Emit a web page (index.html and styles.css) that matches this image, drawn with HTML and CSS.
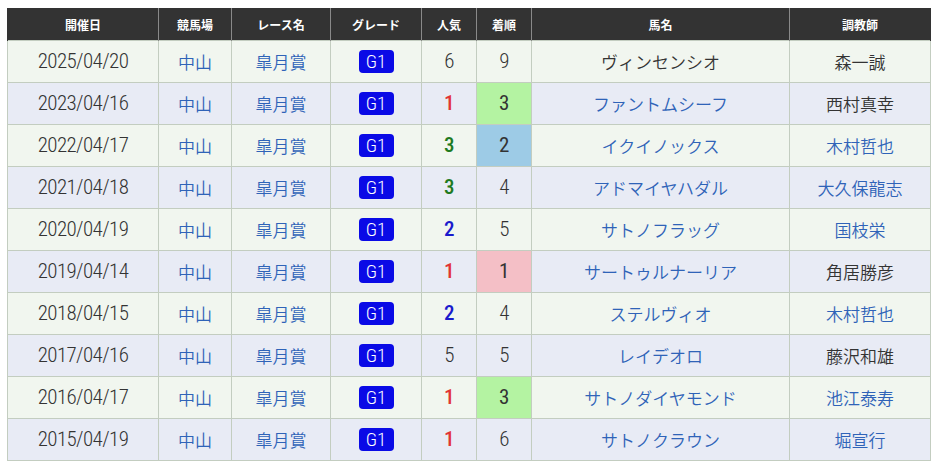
FILE: index.html
```html
<!DOCTYPE html>
<html lang="ja">
<head>
<meta charset="utf-8">
<link rel="stylesheet" href="styles.css">
</head>
<body>
<table class="results">
  <colgroup>
    <col class="c-date"><col class="c-place"><col class="c-race"><col class="c-grade"><col class="c-pop"><col class="c-rank"><col class="c-horse"><col class="c-trainer">
  </colgroup>
  <thead>
    <tr><th>開催日</th><th>競馬場</th><th>レース名</th><th>グレード</th><th>人気</th><th>着順</th><th>馬名</th><th>調教師</th></tr>
  </thead>
  <tbody>
    <tr class="odd"><td class="num">2025/04/20</td><td class="link">中山</td><td class="link">皐月賞</td><td><span class="g1">G1</span></td><td class="num">6</td><td class="num">9</td><td>ヴィンセンシオ</td><td>森一誠</td></tr>
    <tr class="even"><td class="num">2023/04/16</td><td class="link">中山</td><td class="link">皐月賞</td><td><span class="g1">G1</span></td><td class="num p1">1</td><td class="num r3">3</td><td class="link">ファントムシーフ</td><td>西村真幸</td></tr>
    <tr class="odd"><td class="num">2022/04/17</td><td class="link">中山</td><td class="link">皐月賞</td><td><span class="g1">G1</span></td><td class="num p3">3</td><td class="num r2">2</td><td class="link">イクイノックス</td><td class="link">木村哲也</td></tr>
    <tr class="even"><td class="num">2021/04/18</td><td class="link">中山</td><td class="link">皐月賞</td><td><span class="g1">G1</span></td><td class="num p3">3</td><td class="num">4</td><td class="link">アドマイヤハダル</td><td class="link">大久保龍志</td></tr>
    <tr class="odd"><td class="num">2020/04/19</td><td class="link">中山</td><td class="link">皐月賞</td><td><span class="g1">G1</span></td><td class="num p2">2</td><td class="num">5</td><td class="link">サトノフラッグ</td><td class="link">国枝栄</td></tr>
    <tr class="even"><td class="num">2019/04/14</td><td class="link">中山</td><td class="link">皐月賞</td><td><span class="g1">G1</span></td><td class="num p1">1</td><td class="num r1">1</td><td class="link">サートゥルナーリア</td><td>角居勝彦</td></tr>
    <tr class="odd"><td class="num">2018/04/15</td><td class="link">中山</td><td class="link">皐月賞</td><td><span class="g1">G1</span></td><td class="num p2">2</td><td class="num">4</td><td class="link">ステルヴィオ</td><td class="link">木村哲也</td></tr>
    <tr class="even"><td class="num">2017/04/16</td><td class="link">中山</td><td class="link">皐月賞</td><td><span class="g1">G1</span></td><td class="num">5</td><td class="num">5</td><td class="link">レイデオロ</td><td>藤沢和雄</td></tr>
    <tr class="odd"><td class="num">2016/04/17</td><td class="link">中山</td><td class="link">皐月賞</td><td><span class="g1">G1</span></td><td class="num p1">1</td><td class="num r3">3</td><td class="link">サトノダイヤモンド</td><td class="link">池江泰寿</td></tr>
    <tr class="even"><td class="num">2015/04/19</td><td class="link">中山</td><td class="link">皐月賞</td><td><span class="g1">G1</span></td><td class="num p1">1</td><td class="num">6</td><td class="link">サトノクラウン</td><td class="link">堀宣行</td></tr>
  </tbody>
</table>
</body>
</html>
```

FILE: styles.css
```css
html, body {
  margin: 0;
  padding: 0;
  background: #ffffff;
}
body {
  padding: 8px 0 0 7px;
  font-family: "Noto Sans CJK JP", "Noto Sans", sans-serif;
  color: #333333;
}
.results {
  border-collapse: collapse;
  table-layout: fixed;
  width: 923px;
}
.c-date { width: 151px; }
.c-place { width: 73px; }
.c-race { width: 99px; }
.c-grade { width: 91px; }
.c-pop { width: 55px; }
.c-rank { width: 55px; }
.c-horse { width: 258px; }
.c-trainer { width: 141px; }

.results th {
  background: #333333;
  color: #ffffff;
  font-size: 12px;
  font-weight: bold;
  height: 32px;
  padding: 0;
  border-left: 1px solid #8a8a8a;
  border-right: 1px solid #8a8a8a;
  text-align: center;
  vertical-align: middle;
}
.results th:first-child { border-left-color: #333333; }
.results th:last-child { border-right-color: #333333; }
.results td {
  height: 41px;
  padding: 0;
  border: 1px solid #c3cdc0;
  text-align: center;
  vertical-align: middle;
  font-size: 17px;
  font-weight: 350;
  line-height: 1;
  color: #333333;
}
.results tr.odd td { background: #f1f6ef; }
.results tr.even td { background: #e8ebf5; }

.results td.num {
  font-family: "Roboto Condensed", "Liberation Sans Narrow", "DejaVu Sans Condensed", sans-serif;
  font-size: 21px;
  font-weight: 300;
  letter-spacing: -0.6px;
  color: #333333;
}
.results td.link { color: #2f63b8; }
.results td.p1 { color: #e23434; font-weight: 500; }
.results td.p2 { color: #1a1acc; font-weight: 500; }
.results td.p3 { color: #1f7a1f; font-weight: 500; }
.results tr td.r1 { background: #f4bfc6; font-weight: 400; }
.results tr td.r2 { background: #9dcbe6; font-weight: 400; }
.results tr td.r3 { background: #b4f3a2; font-weight: 400; }

.g1 {
  display: inline-block;
  width: 35px;
  height: 23px;
  line-height: 23px;
  border-radius: 4px;
  background: #0a0ae6;
  color: #ffffff;
  font-family: "Roboto Condensed", "Liberation Sans Narrow", "DejaVu Sans Condensed", sans-serif;
  font-size: 19px;
  font-weight: 300;
  vertical-align: middle;
}
```
